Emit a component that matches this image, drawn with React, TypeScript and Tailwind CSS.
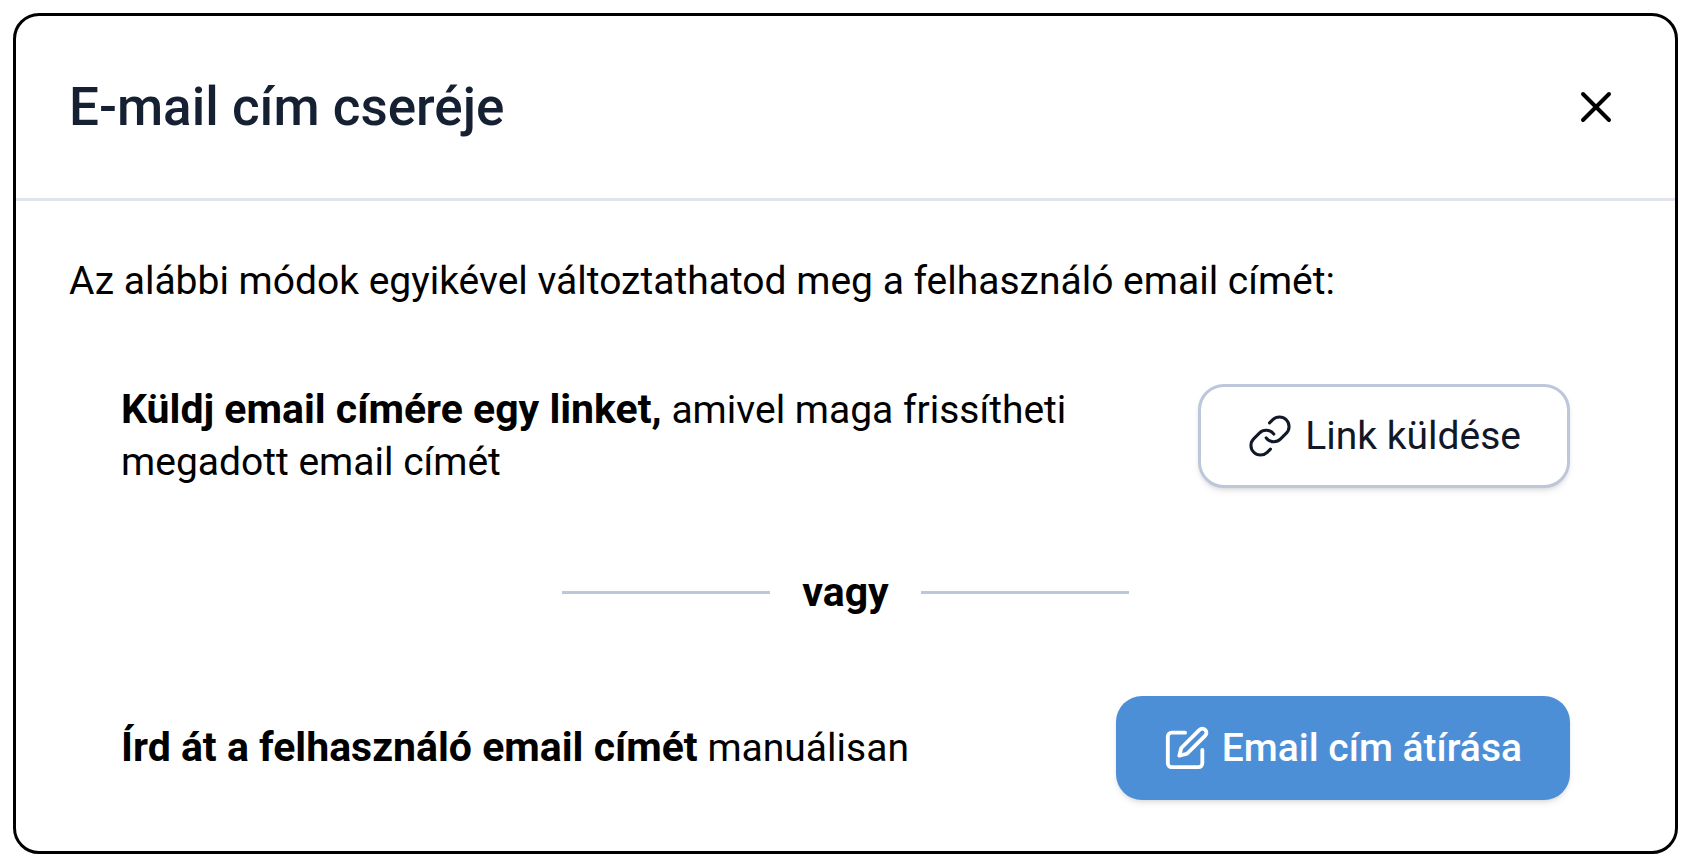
import { Link, X } from "lucide-react";
import { FiEdit } from "react-icons/fi";

export default function App() {
  return (
    <main className="bg-white p-[13px] font-['Roboto',sans-serif] text-[39px] leading-[52px] text-black">
      <section className="rounded-[26px] border-3 border-black pb-[51px]">
        <header className="flex items-center justify-between border-b-3 border-[#e2e4ed] px-[53px] py-[59px]">
          <h1 className="text-[53px] leading-[64px] font-medium text-[#162033]">
            E-mail cím cseréje
          </h1>
          <button type="button" aria-label="Bezárás">
            <X className="size-[52px]" strokeWidth={1.8} />
          </button>
        </header>

        <div className="px-[53px] pt-[54px]">
          <p>
            Az alábbi módok egyikével változtathatod meg a felhasználó email
            címét:
          </p>

          <div className="px-[52px] pt-[77px]">
            <div className="flex items-center justify-between gap-8">
              <p className="max-w-[1000px]">
                <strong className="text-[41px] leading-none font-bold">
                  Küldj email címére egy linket,
                </strong>{" "}
                amivel maga frissítheti megadott email címét
              </p>
              <button
                type="button"
                className="flex h-[104px] shrink-0 items-center gap-3 rounded-[26px] border-3 border-[#bcc8da] bg-white px-[46px] text-[#111827] shadow-md"
              >
                <Link className="size-[46px] shrink-0" strokeWidth={1.6} />
                Link küldése
              </button>
            </div>

            <div className="flex items-center justify-center gap-8 py-[78px] text-[41px] font-bold">
              <span className="h-[3px] w-[208px] bg-[#bcc8da]" />
              vagy
              <span className="h-[3px] w-[208px] bg-[#bcc8da]" />
            </div>

            <div className="flex items-center justify-between gap-8">
              <p>
                <strong className="text-[41px] leading-none font-bold">
                  Írd át a felhasználó email címét
                </strong>{" "}
                manuálisan
              </p>
              <button
                type="button"
                className="flex h-[104px] shrink-0 items-center gap-3 rounded-[26px] bg-[#4d8fd7] px-12 font-medium text-white shadow-md"
              >
                <FiEdit className="size-[46px] shrink-0" />
                Email cím átírása
              </button>
            </div>
          </div>
        </div>
      </section>
    </main>
  );
}
